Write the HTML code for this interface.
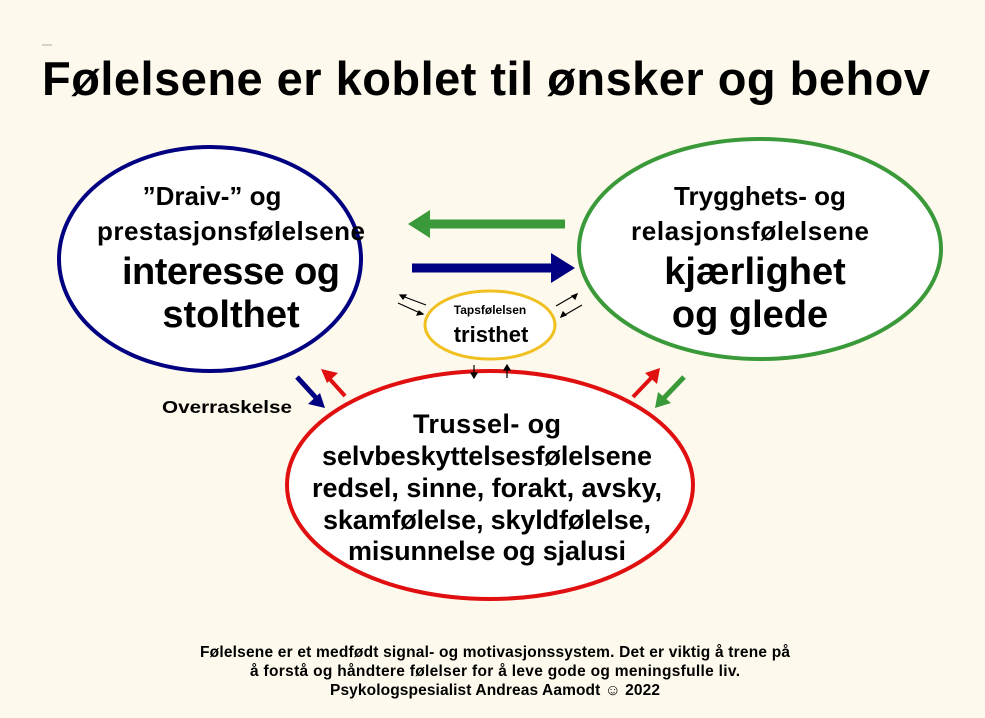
<!DOCTYPE html><html><head><style>body{margin:0;background:#fdf9ec}svg{display:block}text{font-family:"Liberation Sans",Arial,sans-serif;font-weight:bold;fill:#000}</style></head><body>
<svg width="985" height="718" viewBox="0 0 985 718" xmlns="http://www.w3.org/2000/svg">
<rect width="985" height="718" fill="#fdf9ec"/>
<line x1="42" y1="45" x2="52" y2="45" stroke="#aaa" stroke-width="1"/>
<text x="42" y="95" font-size="47" textLength="888">Følelsene er koblet til ønsker og behov</text>
<ellipse cx="210" cy="259" rx="151" ry="112" fill="#fff" stroke="#000080" stroke-width="4"/>
<ellipse cx="760" cy="249" rx="181" ry="110" fill="#fff" stroke="#3a9a3a" stroke-width="4"/>
<ellipse cx="490" cy="485" rx="203" ry="114" fill="#fff" stroke="#e01010" stroke-width="4"/>
<ellipse cx="490" cy="325" rx="65" ry="34" fill="#fff" stroke="#f0c020" stroke-width="3"/>
<g text-anchor="middle">
<text x="212" y="205" font-size="26">”Draiv-” og</text>
<text x="231" y="240" font-size="26" textLength="268">prestasjonsfølelsene</text>
<text x="231" y="284" font-size="38" textLength="218">interesse og</text>
<text x="231" y="327" font-size="38">stolthet</text>
<text x="760" y="205" font-size="26">Trygghets- og</text>
<text x="750" y="240" font-size="26" textLength="238">relasjonsfølelsene</text>
<text x="755" y="284" font-size="38">kjærlighet</text>
<text x="750" y="327" font-size="38">og glede</text>
<text x="490" y="314" font-size="12" font-weight="normal">Tapsfølelsen</text>
<text x="491" y="342" font-size="22">tristhet</text>
<text x="487" y="433" font-size="27" textLength="148">Trussel- og</text>
<text x="487" y="465" font-size="27" textLength="330">selvbeskyttelsesfølelsene</text>
<text x="487" y="497" font-size="27" textLength="350">redsel, sinne, forakt, avsky,</text>
<text x="487" y="529" font-size="27" textLength="328">skamfølelse, skyldfølelse,</text>
<text x="487" y="560" font-size="27" textLength="278">misunnelse og sjalusi</text>
<text x="495" y="657" font-size="15.5" textLength="590">Følelsene er et medfødt signal- og motivasjonssystem. Det er viktig å trene på</text>
<text x="495" y="676" font-size="15.5" textLength="490">å forstå og håndtere følelser for å leve gode og meningsfulle liv.</text>
<text x="495" y="695" font-size="15.5" textLength="330">Psykologspesialist Andreas Aamodt ☺ 2022</text>
</g>
<text x="162" y="413" font-size="17.5" textLength="130" lengthAdjust="spacingAndGlyphs">Overraskelse</text>
<path d="M565 224H425" stroke="#3a9a3a" stroke-width="9"/><path d="M408 224L430 210V238Z" fill="#3a9a3a"/>
<path d="M412 268H555" stroke="#000080" stroke-width="9"/><path d="M575 268L551 253V283Z" fill="#000080"/>
<g stroke="#000" stroke-width="1.2" fill="#000">
<path d="M426 305L402 296"/><path d="M400 295l6 0-3 4z"/>
<path d="M398 303L420 313"/><path d="M423 314l-6 1 2-4z"/>
<path d="M556 306L575 295"/><path d="M577 294l-2 5-3-3z"/>
<path d="M582 305L563 316"/><path d="M561 317l2-5 3 3z"/>
<path d="M474 365V377"/><path d="M471 373h6l-3 5z"/>
<path d="M507 378V366"/><path d="M504 370h6l-3-5z"/>
</g>
<path d="M297 377L318 400" stroke="#000080" stroke-width="5"/><path d="M325 408L308 404L320 393Z" fill="#000080"/>
<path d="M345 396L327 376" stroke="#e01010" stroke-width="4"/><path d="M321 369L338 373L327 383Z" fill="#e01010"/>
<path d="M633 397L654 375" stroke="#e01010" stroke-width="4"/><path d="M660 368L657 384L645 373Z" fill="#e01010"/>
<path d="M684 377L662 400" stroke="#3a9a3a" stroke-width="5"/><path d="M655 408L658 392L671 403Z" fill="#3a9a3a"/>
</svg></body></html>
